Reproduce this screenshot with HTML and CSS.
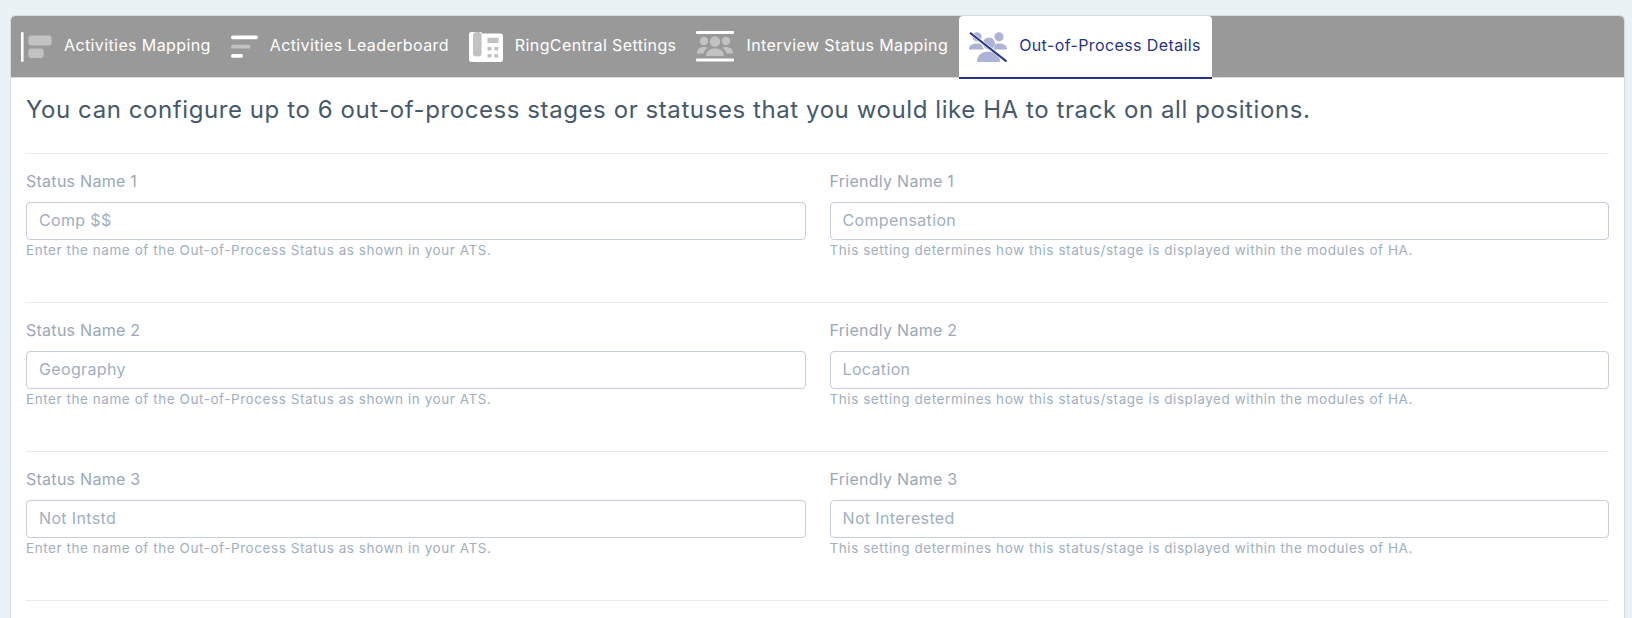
FILE: index.html
```html
<!DOCTYPE html>
<html lang="en">
<head>
<meta charset="utf-8">
<title>Out-of-Process Details</title>
<link rel="stylesheet" href="styles.css">
</head>
<body>
<main class="card">
  <nav class="tabs">
    <a class="tab">
      <svg class="icon" width="31" height="30" viewBox="0 0 31 30"><rect x="0" y="0" width="2.6" height="30" rx="1.2" fill="#fff"/><rect x="7.3" y="3.5" width="23.4" height="10" rx="3" fill="#c2c2c2"/><rect x="7.3" y="16.5" width="15.4" height="9.4" rx="3" fill="#c2c2c2"/></svg>
      <span>Activities Mapping</span>
    </a>
    <a class="tab">
      <svg class="icon" width="27" height="30" viewBox="0 0 27 30"><rect x="0" y="3.4" width="27" height="3.8" rx="1.9" fill="#fff"/><rect x="0" y="12.8" width="19.4" height="3.8" rx="1.9" fill="#c2c2c2"/><rect x="0" y="22" width="12" height="3.8" rx="1.9" fill="#fff"/></svg>
      <span>Activities Leaderboard</span>
    </a>
    <a class="tab">
      <svg class="icon" width="34" height="30" viewBox="0 0 34 30"><path d="M2.5 0H12.5V1.6H31.5A2.5 2.5 0 0 1 34 4.1V27.5A2.5 2.5 0 0 1 31.5 30H2.5A2.5 2.5 0 0 1 0 27.5V2.5A2.5 2.5 0 0 1 2.5 0Z" fill="#fff"/><rect x="4" y="0" width="8.6" height="24.5" rx="3.5" fill="#c2c2c2"/><rect x="18.5" y="5.7" width="11" height="5.3" fill="#c2c2c2"/><rect x="18.5" y="15" width="4" height="3.5" rx=".6" fill="#c2c2c2"/><rect x="25.3" y="15" width="4" height="3.5" rx=".6" fill="#c2c2c2"/><rect x="18.5" y="22" width="4" height="3.5" rx=".6" fill="#c2c2c2"/><rect x="25.3" y="22" width="4" height="3.5" rx=".6" fill="#c2c2c2"/></svg>
      <span>RingCentral Settings</span>
    </a>
    <a class="tab">
      <svg class="icon" width="38" height="31" viewBox="0 0 38 31"><rect x="0" y="0" width="38" height="3" rx="1" fill="#fff"/><rect x="0" y="27.6" width="38" height="3" rx="1" fill="#fff"/><g fill="#c2c2c2"><circle cx="8" cy="10" r="4.2"/><circle cx="19" cy="10.5" r="5.2"/><circle cx="30" cy="10" r="4.2"/><path d="M1 22.5C1 18 4 16 8 16C9.5 16 10.7 16.3 11.7 16.8C9.3 18.3 8 20.3 7.6 22.5Z"/><path d="M37 22.5C37 18 34 16 30 16C28.5 16 27.3 16.3 26.3 16.8C28.7 18.3 30 20.3 30.4 22.5Z"/><path d="M10 25C10 20 14 17.5 19 17.5C24 17.5 28 20 28 25Z"/></g></svg>
      <span>Interview Status Mapping</span>
    </a>
    <a class="tab tab-active">
      <svg class="icon" width="38" height="30" viewBox="0 0 38 30"><g fill="#adb3d6"><circle cx="8" cy="4.8" r="4.6"/><circle cx="30" cy="4.8" r="4.6"/><circle cx="20" cy="11.5" r="6"/><path d="M0 17.5C0 13.5 3 11.5 8 11.5C10 11.5 11.5 12 12.5 12.5C13 14.5 14 16 15 17.5Z"/><path d="M38 17.5C38 13.5 35 11.5 30 11.5C28 11.5 26.5 12 25.5 12.5C25.8 14.5 25 16 24 17.5Z"/><path d="M8 30C8 23 13 19.5 19.5 19.5C26 19.5 31 23 31 30Z"/></g><path d="M1.5 1L37 29" stroke="#fff" stroke-width="3"/><path d="M1 .8L37.5 29.5" stroke="#25348a" stroke-width="2"/></svg>
      <span>Out-of-Process Details</span>
    </a>
  </nav>
  <section class="body">
    <h1 class="intro">You can configure up to 6 out-of-process stages or statuses that you would like HA to track on all positions.</h1>
    <div class="row">
      <div class="field"><label class="label">Status Name 1</label><input class="input" placeholder="Comp $$"><p class="help">Enter the name of the Out-of-Process Status as shown in your ATS.</p></div>
      <div class="field"><label class="label">Friendly Name 1</label><input class="input" placeholder="Compensation"><p class="help">This setting determines how this status/stage is displayed within the modules of HA.</p></div>
    </div>
    <div class="row">
      <div class="field"><label class="label">Status Name 2</label><input class="input" placeholder="Geography"><p class="help">Enter the name of the Out-of-Process Status as shown in your ATS.</p></div>
      <div class="field"><label class="label">Friendly Name 2</label><input class="input" placeholder="Location"><p class="help">This setting determines how this status/stage is displayed within the modules of HA.</p></div>
    </div>
    <div class="row">
      <div class="field"><label class="label">Status Name 3</label><input class="input" placeholder="Not Intstd"><p class="help">Enter the name of the Out-of-Process Status as shown in your ATS.</p></div>
      <div class="field"><label class="label">Friendly Name 3</label><input class="input" placeholder="Not Interested"><p class="help">This setting determines how this status/stage is displayed within the modules of HA.</p></div>
    </div>
    <div class="row row-last"></div>
  </section>
</main>
</body>
</html>
```
FILE: styles.css
```css
* { box-sizing: border-box; }
html, body { height: 100%; }
body {
  margin: 0;
  padding: 15px 7px 0 10px;
  background: #eaf2f6;
  font-family: Inter, "Liberation Sans", sans-serif;
  overflow: hidden;
}
.card {
  height: 100%;
  overflow: hidden;
  background: #fff;
  border: 1px solid #d6dde1;
  border-bottom: 0;
  border-radius: 5px 5px 0 0;
}
.tabs {
  display: flex;
  height: 62px;
  padding: 0 10px;
  background: #999;
  border-bottom: 1px solid #dcdcdc;
  border-radius: 4px 4px 0 0;
}
.tab {
  display: flex;
  align-items: center;
  gap: 12px;
  height: 61px;
  padding: 0 10px;
  color: #fff;
  font-size: 16px;
  letter-spacing: 0.39px;
  white-space: nowrap;
}
.tab span { padding-bottom: 3px; }
.tab:first-child { padding-left: 0; }
.tab-active {
  height: 63px;
  margin-left: 1px;
  padding-right: 11px;
  background: #fff;
  color: #25348a;
  border-bottom: 2px solid #25348a;
  border-radius: 4px 4px 0 0;
}
.body { padding: 0 15px; }
.intro {
  margin: 0;
  height: 75px;
  padding-top: 17px;
  font-size: 24px;
  line-height: 30px;
  font-weight: 400;
  letter-spacing: 0.58px;
  color: #46596b;
}
.row {
  display: grid;
  grid-template-columns: 1fr 1fr;
  gap: 24px;
  height: 149px;
  padding-top: 17px;
  border-top: 1px solid #e9ecef;
}
.row-last { height: 18px; padding-top: 0; }
.label {
  display: block;
  height: 31px;
  font-size: 16px;
  line-height: 20px;
  letter-spacing: 0.27px;
  color: #9aa8b8;
}
.input {
  display: block;
  width: 100%;
  height: 38px;
  padding: 0 12px 2px;
  border: 1px solid #c6ced9;
  border-radius: 4px;
  background: #fff;
  font-family: inherit;
  font-size: 16px;
  letter-spacing: 0.35px;
  outline: 0;
}
.input::placeholder { color: #a0afc0; opacity: 1; }
.help {
  margin: 1px 0 0;
  font-size: 13.5px;
  line-height: 18px;
  letter-spacing: 0.56px;
  color: #a0afc0;
}
```
